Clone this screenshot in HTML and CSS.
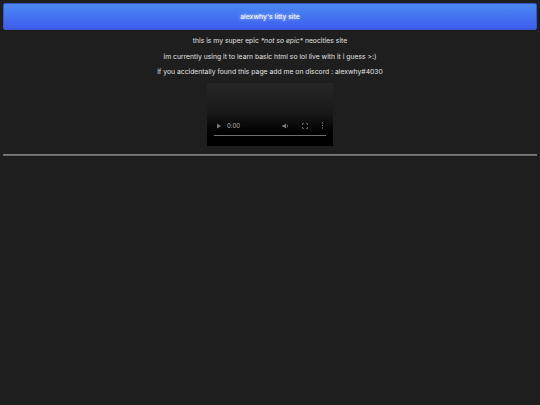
FILE: index.html
```html
<!doctype html>
<html>

<head lang="en">
  <meta charset="utf-8">
  <title>alexwhy's litty site</title>
  <link rel="stylesheet" href="styles.css">
</head>

<body>
  <header>
    <span class="title">alexwhy's litty site</span>
  </header>

  <div class="page">
    <p>this is my super epic <i>*not so epic*</i> neocities site</p>
    <p>im currently using it to learn basic html so lol live with it i guess &gt;:)</p>
    <p>if you accidentally found this page add me on discord : alexwhy#4030</p>

    <div class="video">
      <div class="controls">
        <div class="bar">
          <svg class="icon" width="6" height="6" viewBox="0 0 6 6"><path d="M1 0.5 L5 3 L1 5.5 Z" fill="#7a7a7a"/></svg>
          <span class="time">0:00</span>
          <span class="spacer"></span>
          <div class="right">
            <svg class="icon" width="7" height="6" viewBox="0 0 7 6"><path d="M0.5 2 H2 L4 0.5 V5.5 L2 4 H0.5 Z" fill="#7a7a7a"/><path d="M5 1.5 Q6.5 3 5 4.5" stroke="#7a7a7a" stroke-width="0.8" fill="none"/></svg>
            <svg class="icon" width="6" height="6" viewBox="0 0 6 6"><path d="M0.5 2 V0.5 H2 M4 0.5 H5.5 V2 M5.5 4 V5.5 H4 M2 5.5 H0.5 V4" stroke="#6a6a6a" stroke-width="0.9" fill="none"/></svg>
            <svg class="icon" width="3" height="7" viewBox="0 0 3 7"><circle cx="1.5" cy="1" r="0.7" fill="#7a7a7a"/><circle cx="1.5" cy="3.5" r="0.7" fill="#7a7a7a"/><circle cx="1.5" cy="6" r="0.7" fill="#7a7a7a"/></svg>
          </div>
        </div>
        <div class="progress"></div>
      </div>
    </div>
  </div>

  <hr>
</body>

</html>
```

FILE: styles.css
```css
body {
  font-family: "Inter", "Liberation Sans", sans-serif;
  font-size: 6.8px;
  background: #1e1e1e;
  color: #e0e0e0;
  margin: 3px;
}

header {
  height: 25px;
  background: linear-gradient(#4a8af3, #3e5cef);
  border: 1px solid #3a55c8;
  border-radius: 2px;
  display: flex;
  align-items: center;
  justify-content: center;
}

.title {
  color: #eef2ff;
  font-weight: 500;
  text-shadow: 0 0 3px rgba(255, 255, 255, .8);
}

.page {
  text-align: center;
  padding-top: 3px;
}

p {
  margin: 0;
  line-height: 15.5px;
}

.video {
  width: 126px;
  height: 63px;
  margin: 3px auto 0;
  background: linear-gradient(#262626 0%, #1a1a1a 45%, #000 80%);
  display: flex;
  flex-direction: column;
  justify-content: flex-end;
}

.controls {
  padding: 0 7px 10px;
}

.bar {
  display: flex;
  align-items: center;
  gap: 5px;
  height: 8px;
  padding: 0 2px;
}

.right {
  display: flex;
  align-items: center;
  gap: 13px;
}

.time {
  color: #bdbdbd;
  font-size: 6px;
}

.spacer {
  flex: 1;
}

.icon {
  display: block;
}

.progress {
  height: 1px;
  background: #6e6e6e;
  margin-top: 5px;
}

hr {
  margin: 8px 0 0;
  border: 1px solid #6a6a6a;
  border-top-color: #7a7a7a;
  height: 0;
}
```
